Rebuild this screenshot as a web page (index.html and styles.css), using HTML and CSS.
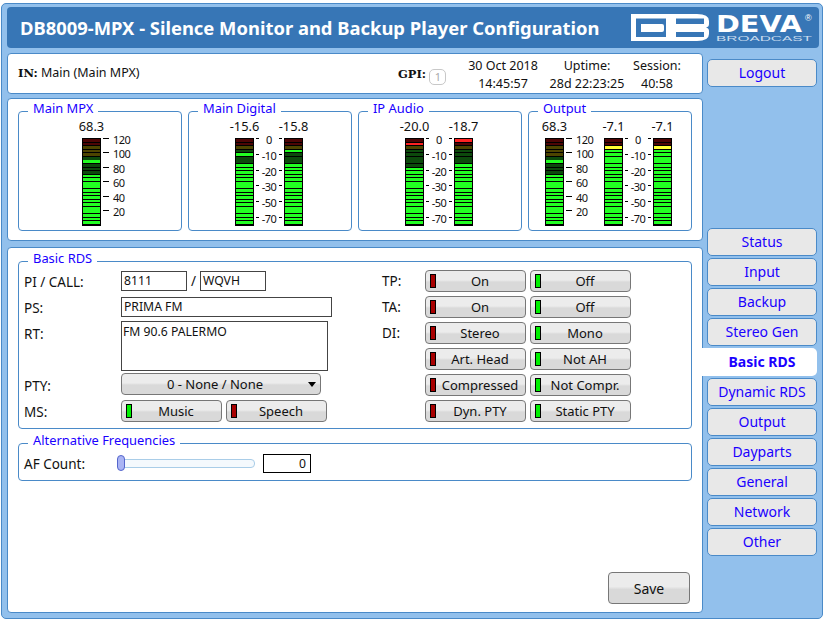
FILE: index.html
```html
<!DOCTYPE html>
<html>
<head>
    <title>DB8009-MPX - Basic RDS</title>
    <link rel="stylesheet" href="styles.css">
</head>
<body>
    <div class="window">
        <div class="header">
            <h1 class="title">DB8009-MPX - Silence Monitor and Backup Player Configuration</h1>
            <svg class="logo" width="183" height="30" viewBox="0 0 183 30">
                <path fill="#fff" fill-rule="evenodd" d="M0 2H66Q78 2 78 9V12Q78 15 75 15.5Q78 16 78 19V22Q78 29 66 29H0ZM5 6.5V25H35V6.5ZM10 12H31Q33 12 33 14V18Q33 20 31 20H10ZM45 6.5V12H73V6.5ZM45 20V25H73V20Z"/>
                <text class="logo-name" x="85" y="19.5" textLength="86" lengthAdjust="spacingAndGlyphs">DEVA</text>
                <text class="logo-reg" x="174" y="9">®</text>
                <text class="logo-sub" x="85" y="29" textLength="96" lengthAdjust="spacingAndGlyphs">BROADCAST</text>
            </svg>
        </div>
        <div class="columns">
            <div class="main">
                <div class="panel status">
                    <div class="status-in"><b class="tag">IN:</b> Main (Main MPX)</div>
                    <div class="status-gpi"><b class="tag">GPI:</b> <span class="gpi-badge">1</span></div>
                    <div class="status-cell status-date">30 Oct 2018<br>14:45:57</div>
                    <div class="status-cell status-up">Uptime:<br>28d 22:23:25</div>
                    <div class="status-cell status-sess">Session:<br>40:58</div>
                </div>
                <div class="panel meters">
                    <fieldset class="box meter-box">
                        <legend>Main MPX</legend>
                        <div class="meter-row pad-mpx">
                            <div class="channel"><span class="val">68.3</span><div class="bar lvl-mpx"></div></div>
                            <div class="scale scale-mpx"><span>120</span><span>100</span><span>80</span><span>60</span><span>40</span><span>20</span></div>
                        </div>
                    </fieldset>
                    <fieldset class="box meter-box">
                        <legend>Main Digital</legend>
                        <div class="meter-row pad-db">
                            <div class="channel"><span class="val">-15.6</span><div class="bar lvl-d1"></div></div>
                            <div class="scale scale-db"><span>0</span><span>-10</span><span>-20</span><span>-30</span><span>-50</span><span>-70</span></div>
                            <div class="channel"><span class="val">-15.8</span><div class="bar lvl-d2"></div></div>
                        </div>
                    </fieldset>
                    <fieldset class="box meter-box">
                        <legend>IP Audio</legend>
                        <div class="meter-row pad-db">
                            <div class="channel"><span class="val">-20.0</span><div class="bar lvl-ip1"></div></div>
                            <div class="scale scale-db"><span>0</span><span>-10</span><span>-20</span><span>-30</span><span>-50</span><span>-70</span></div>
                            <div class="channel"><span class="val">-18.7</span><div class="bar lvl-ip2"></div></div>
                        </div>
                    </fieldset>
                    <fieldset class="box meter-box">
                        <legend>Output</legend>
                        <div class="meter-row pad-out">
                            <div class="channel"><span class="val">68.3</span><div class="bar lvl-mpx"></div></div>
                            <div class="scale scale-mpx scale-out"><span>120</span><span>100</span><span>80</span><span>60</span><span>40</span><span>20</span></div>
                            <div class="channel"><span class="val">-7.1</span><div class="bar lvl-out"></div></div>
                            <div class="scale scale-db"><span>0</span><span>-10</span><span>-20</span><span>-30</span><span>-50</span><span>-70</span></div>
                            <div class="channel"><span class="val">-7.1</span><div class="bar lvl-out"></div></div>
                        </div>
                    </fieldset>
                </div>
                <div class="panel content">
                    <fieldset class="box rds">
                        <legend>Basic RDS</legend>
                        <div class="rds-grid">
                            <div class="rds-left">
                                <div class="row row-pi">
                                    <label>PI / CALL:</label>
                                    <span class="input w-short">8111</span>
                                    <span class="slash">/</span>
                                    <span class="input w-short">WQVH</span>
                                </div>
                                <div class="row row-ps">
                                    <label>PS:</label>
                                    <span class="input w-long">PRIMA FM</span>
                                </div>
                                <div class="row row-rt">
                                    <label>RT:</label>
                                    <span class="textarea">FM 90.6 PALERMO</span>
                                </div>
                                <div class="row row-pty">
                                    <label>PTY:</label>
                                    <button class="btn select">0 - None / None<i class="caret"></i></button>
                                </div>
                                <div class="row row-ms">
                                    <label>MS:</label>
                                    <button class="btn led-on">Music</button>
                                    <button class="btn led-off">Speech</button>
                                </div>
                            </div>
                            <div class="rds-right">
                                <div class="flag"><label>TP:</label><button class="btn led-off">On</button><button class="btn led-on">Off</button></div>
                                <div class="flag"><label>TA:</label><button class="btn led-off">On</button><button class="btn led-on">Off</button></div>
                                <div class="flag"><label>DI:</label><button class="btn led-off">Stereo</button><button class="btn led-on">Mono</button></div>
                                <div class="flag"><label></label><button class="btn led-off">Art. Head</button><button class="btn led-on">Not AH</button></div>
                                <div class="flag"><label></label><button class="btn led-off">Compressed</button><button class="btn led-on">Not Compr.</button></div>
                                <div class="flag"><label></label><button class="btn led-off">Dyn. PTY</button><button class="btn led-on">Static PTY</button></div>
                            </div>
                        </div>
                    </fieldset>
                    <fieldset class="box af">
                        <legend>Alternative Frequencies</legend>
                        <div class="af-row">
                            <label>AF Count:</label>
                            <div class="slider"><i class="knob"></i></div>
                            <span class="count">0</span>
                        </div>
                    </fieldset>
                    <div class="save-row"><button class="btn save">Save</button></div>
                </div>
            </div>
            <div class="nav">
                <a class="nav-item logout">Logout</a>
                <a class="nav-item">Status</a>
                <a class="nav-item">Input</a>
                <a class="nav-item">Backup</a>
                <a class="nav-item">Stereo Gen</a>
                <a class="nav-item active">Basic RDS</a>
                <a class="nav-item">Dynamic RDS</a>
                <a class="nav-item">Output</a>
                <a class="nav-item">Dayparts</a>
                <a class="nav-item">General</a>
                <a class="nav-item">Network</a>
                <a class="nav-item">Other</a>
            </div>
        </div>
    </div>
</body>
</html>
```

FILE: styles.css
```css
html, body { margin: 0; padding: 0; background: #fff; }
body { font-family: "Noto Sans", "DejaVu Sans", sans-serif; font-size: 13.5px; color: #111; }
.window { box-sizing: border-box; width: 822px; height: 616px; margin: 3px 0 0 1px; padding: 3px 3px 3px 5px; background: #92c0ec; border: 1px solid #4a8ac8; border-radius: 5px; }
.header { display: flex; justify-content: space-between; align-items: center; box-sizing: border-box; height: 41px; padding: 0 5px 1px 13px; background: #3776b6; border-radius: 4px; }
.title { margin: 0; color: #fff; font-size: 18.4px; font-weight: bold; white-space: nowrap; }
.logo { display: block; }
.logo-name { fill: #fff; font-family: "DejaVu Sans", sans-serif; font-weight: bold; font-size: 23px; }
.logo-reg { fill: #fff; font-family: "Liberation Sans", sans-serif; font-size: 9px; }
.logo-sub { fill: #c8dbee; font-family: "Liberation Sans", sans-serif; font-size: 7px; }
.columns { display: flex; margin-top: 5px; }
.main { width: 696px; }
.panel { box-sizing: border-box; background: #fff; border: 1px solid #4a8ac8; border-radius: 4px; }

/* status bar */
.status { position: relative; height: 41px; font-size: 12.5px; }
.status-in { position: absolute; left: 10px; top: 10px; }
.tag { font-family: "DejaVu Serif", serif; font-size: 11.5px; }
.status-gpi { position: absolute; left: 390px; top: 11px; }
.gpi-badge { display: inline-block; box-sizing: border-box; width: 17px; height: 16px; margin-left: 0; border: 1px solid #c8c8c8; border-radius: 5px; color: #aaa; font-size: 11px; line-height: 14px; text-align: center; vertical-align: -3px; }
.status-cell { position: absolute; top: 3px; text-align: center; line-height: 18px; white-space: nowrap; }
.status-date { left: 460px; width: 70px; }
.status-up { left: 538px; width: 82px; }
.status-sess { left: 620px; width: 58px; }

/* meters */
.meters { display: flex; gap: 6px; height: 143px; margin-top: 4px; padding: 1px 10px 0; }
.box { margin: 0; padding: 0; border: 1px solid #4a8ac8; border-radius: 4px; min-width: 0; }
.box legend { margin: 0 0 -1px 9px; padding: 0 5px 6px; color: #1a00ff; font-size: 12.9px; line-height: 17px; }
.meter-box { flex: 1 1 0; box-sizing: border-box; height: 131px; }
.meter-row { display: flex; align-items: flex-start; }
.pad-mpx { padding-left: 63px; }
.pad-db { padding-left: 46px; }
.pad-out { padding-left: 16px; }
.channel { position: relative; width: 19px; flex: none; }
.val { position: absolute; left: -10px; right: -10px; top: -3px; text-align: center; font-size: 12.8px; line-height: 14px; white-space: nowrap; }
.bar { position: relative; box-sizing: border-box; width: 19px; height: 88px; margin-top: 16px; border: 1px solid #000; }
.bar::after { content: ""; position: absolute; inset: 0; background: repeating-linear-gradient(to bottom, transparent 0, transparent 2.67px, #000 2.67px, #000 3.57px); }
.scale { display: flex; flex-direction: column; box-sizing: border-box; flex: none; margin-top: 11px; }
.scale span { position: relative; display: block; height: 14px; font-size: 11px; letter-spacing: -0.5px; line-height: 14px; }
.scale span::before { content: ""; position: absolute; top: 5px; height: 1px; background: #000; }
.scale-mpx { width: 30px; padding-left: 12px; gap: 0.4px; }
.scale-mpx span::before { left: -10px; width: 6px; }
.scale-db { width: 30px; gap: 1.75px; }
.scale-db span { text-align: center; }
.scale-db span::before { left: 2px; width: 3px; }
.scale-db span::after { content: ""; position: absolute; top: 5px; right: 2px; width: 3px; height: 1px; background: #000; }
.scale-out { width: 40px; }

/* level patterns, one stop per lit or unlit segment range */
.lvl-mpx { background: linear-gradient(to bottom, #4d0505 0 6.7px, #4d4400 6.7px 17.4px, #0c4a0c 17.4px 21px, #22ff22 21px 24.5px, #0c4a0c 24.5px 35.3px, #22ff22 35.3px); }
.lvl-d1 { background: linear-gradient(to bottom, #4d0505 0 6.7px, #4d4400 6.7px 10.3px, #0c4a0c 10.3px 13.8px, #22ff22 13.8px 17.4px, #0c4a0c 17.4px 24.5px, #22ff22 24.5px); }
.lvl-d2 { background: linear-gradient(to bottom, #4d0505 0 6.7px, #4d4400 6.7px 10.3px, #22ff22 10.3px 13.8px, #0c4a0c 13.8px 24.5px, #22ff22 24.5px); }
.lvl-ip1 { background: linear-gradient(to bottom, #4d0505 0 3.1px, #ff2222 3.1px 6.7px, #4d4400 6.7px 10.3px, #0c4a0c 10.3px 28.1px, #22ff22 28.1px); }
.lvl-ip2 { background: linear-gradient(to bottom, #ff2222 0 3.1px, #4d0505 3.1px 6.7px, #4d4400 6.7px 10.3px, #0c4a0c 10.3px 24.5px, #22ff22 24.5px); }
.lvl-out { background: linear-gradient(to bottom, #4d0505 0 6.7px, #ffff33 6.7px 10.3px, #22ff22 10.3px); }

/* main content */
.content { display: flex; flex-direction: column; height: 366px; margin-top: 6px; padding: 2px 10px 0; }
.rds { height: 179px; box-sizing: border-box; }
.rds-grid { display: flex; margin-top: -1px; }
.rds-left { width: 358px; padding-left: 5px; }
.row { display: flex; align-items: center; }
.row label, .flag label, .af-row label { font-size: 13.5px; }
.row label { width: 97px; flex: none; }
.input { box-sizing: border-box; display: block; height: 20px; padding-left: 2px; border: 1px solid #444; font-size: 12.2px; line-height: 18px; }
.w-short { width: 66px; }
.w-long { width: 211px; }
.slash { width: 13px; text-align: center; }
.row-pi { height: 20px; }
.row-pi label, .row-ps label { padding-top: 2px; }
.row-ps { height: 20px; margin-top: 6px; }
.row-rt { align-items: flex-start; margin-top: 4px; }
.row-rt label { margin-top: 4px; }
.textarea { box-sizing: border-box; display: block; width: 207px; height: 50px; padding: 2px 0 0 1px; border: 1px solid #444; font-size: 12.2px; line-height: 16px; }
.row-pty { margin-top: 2px; }
.row-pty label { margin-top: 4px; }
.row-ms { margin-top: 5px; gap: 4px; }
.row-ms label { margin: 2px -4px 0 0; }
.btn { position: relative; box-sizing: border-box; display: block; height: 22px; padding: 0; border: 1px solid #777; border-radius: 4px; background: linear-gradient(to bottom, #ececec 0, #ececec 45%, #d9d9d9 55%, #d9d9d9 100%); color: #111; font-family: inherit; font-size: 13px; line-height: 19px; white-space: nowrap; }
.led-on, .led-off { width: 101px; padding-left: 9px; }
.led-on::before, .led-off::before { content: ""; position: absolute; left: 4px; top: 3px; box-sizing: border-box; width: 6px; height: 14px; border: 1px solid #000; }
.led-on::before { background: #00f000; }
.led-off::before { background: #a80000; }
.select { width: 200px; padding-right: 12px; }
.caret { position: absolute; right: 4px; top: 8px; border-style: solid; border-width: 5px 4px 0; border-color: #000 transparent transparent; }
.rds-right { margin-top: -1px; }
.flag { display: flex; align-items: center; gap: 4px; height: 22px; margin-bottom: 4px; }
.flag label { width: 43px; margin-right: -4px; flex: none; }
.af { height: 49px; box-sizing: border-box; margin-top: 3px; }
.af-row { display: flex; align-items: center; height: 19px; padding-left: 5px; }
.af-row label { width: 96px; flex: none; }
.slider { position: relative; width: 135px; height: 9px; box-sizing: border-box; border: 1px solid #a9cde8; border-radius: 4px; background: #f4f9fd; }
.knob { position: absolute; left: -4px; top: -5px; box-sizing: border-box; width: 8px; height: 16px; border: 1px solid #5566cc; border-radius: 4px; background: #aab4f4; }
.count { box-sizing: border-box; width: 48px; height: 19px; margin-left: 8px; padding-right: 4px; border: 1px solid #000; font-size: 12.2px; line-height: 18px; text-align: right; }
.save-row { display: flex; justify-content: flex-end; margin-top: auto; padding: 0 2px 8px 0; }
.save { width: 82px; height: 32px; font-size: 14px; }

/* right hand nav */
.nav { display: flex; flex-direction: column; width: 114px; padding-top: 6px; }
.nav-item { box-sizing: border-box; display: block; width: 110px; height: 28px; margin: 0 0 2px 4px; border: 1px solid #4a8ac8; border-radius: 5px; background: #e8e8e8; color: #1a00ff; font-size: 14px; line-height: 26px; text-align: center; }
.logout { margin-bottom: 141px; }
.active { width: 115px; margin-left: -1px; padding-left: 5px; border: 0; border-radius: 0 5px 5px 0; background: #fff; font-weight: bold; line-height: 28px; }
```
